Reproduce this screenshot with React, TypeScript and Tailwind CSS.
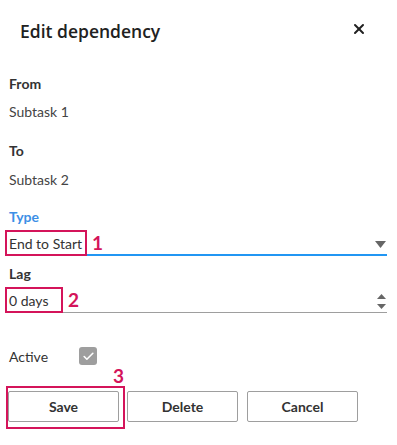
import { Check, X } from "lucide-react";

const red = "#d4145a";

function Label({ children, className = "" }: { children: React.ReactNode; className?: string }) {
  return <div className={`text-[14px] leading-5 font-bold text-[#333] ${className}`}>{children}</div>;
}

function Value({ children, className = "" }: { children: React.ReactNode; className?: string }) {
  return <div className={`text-[14px] leading-5 text-[#444] ${className}`}>{children}</div>;
}

export default function App() {
  return (
    <div
      className="w-[397px] h-[445px] bg-white overflow-hidden"
      style={{ fontFamily: 'Lato, "Open Sans", sans-serif' }}
    >
      <div className="h-[62px] flex items-center justify-between pl-5 pr-[30px]">
        <h2
          className="text-[17.5px] font-semibold text-[#212121]"
          style={{ fontFamily: '"Open Sans", sans-serif' }}
        >
          Edit dependency
        </h2>
        <X size={16} strokeWidth={3} className="text-[#212121] -mt-1" />
      </div>

      <div className="pl-[9px] pr-[10px]">
        <Label className="mt-3">From</Label>
        <Value className="mt-2">Subtask 1</Value>
        <Label className="mt-[19px]">To</Label>
        <Value className="mt-[9px]">Subtask 2</Value>
        <div className="mt-[17px] text-[14px] leading-5 font-bold text-[#3d8fe6]">Type</div>

        {/* select with annotation 1 */}
        <div className="mt-[3px] -ml-[4px] flex items-stretch h-[26px]">
          <div className="w-[82px] border-2 border-[#d4145a] pl-[2px] flex items-center text-[14px] text-[#333]">
            End to Start
          </div>
          <div className="flex-1 flex items-center justify-between border-b-2 border-[#2196f3] pl-[5px] pr-[1px]">
            <span className="text-[19px] font-bold leading-none" style={{ color: red }}>1</span>
            <svg width="11" height="7" viewBox="0 0 11 7" className="mt-1">
              <path d="M0 0h11L5.5 7z" fill="#666" />
            </svg>
          </div>
        </div>

        <Label className="mt-2">Lag</Label>

        {/* numeric input with annotation 2 */}
        <div className="mt-[3px] -ml-[4px] flex items-stretch h-[26px]">
          <div className="w-[58px] border-2 border-[#d4145a] pl-[2px] flex items-center text-[14px] text-[#333]">
            0 days
          </div>
          <div className="flex-1 flex items-center justify-between border-b border-[#9e9e9e] pl-[5px] pr-[1px]">
            <span className="text-[19px] font-bold leading-none" style={{ color: red }}>2</span>
            <div className="flex flex-col gap-[5px] mt-[3px]">
              <svg width="9" height="5" viewBox="0 0 9 5">
                <path d="M0 5h9L4.5 0z" fill="#666" />
              </svg>
              <svg width="9" height="5" viewBox="0 0 9 5">
                <path d="M0 0h9L4.5 5z" fill="#666" />
              </svg>
            </div>
          </div>
        </div>

        <div className="mt-[33px] flex items-center h-5">
          <span className="w-[70px] text-[14px] text-[#333]">Active</span>
          <span className="w-[18px] h-[18px] rounded-[3px] bg-[#9e9e9e] flex items-center justify-center">
            <Check size={13} strokeWidth={3} className="text-white" />
          </span>
        </div>

        <div className="h-[20px] pl-[104px] text-[19px] font-bold leading-5" style={{ color: red }}>
          3
        </div>

        <div className="flex items-start -ml-[3px]">
          <div className="border-2 border-[#d4145a] pt-[3px] pb-[5px] pr-[4px]">
            <button className="w-[111px] h-[31px] border border-[#9e9e9e] rounded-[2px] text-[14px] font-bold text-[#333]">
              Save
            </button>
          </div>
          <div className="mt-[5px] ml-[2px] flex gap-[9px]">
            <button className="w-[111px] h-[31px] border border-[#9e9e9e] rounded-[2px] text-[14px] font-bold text-[#333]">
              Delete
            </button>
            <button className="w-[111px] h-[31px] border border-[#9e9e9e] rounded-[2px] text-[14px] font-bold text-[#333]">
              Cancel
            </button>
          </div>
        </div>
      </div>
    </div>
  );
}
